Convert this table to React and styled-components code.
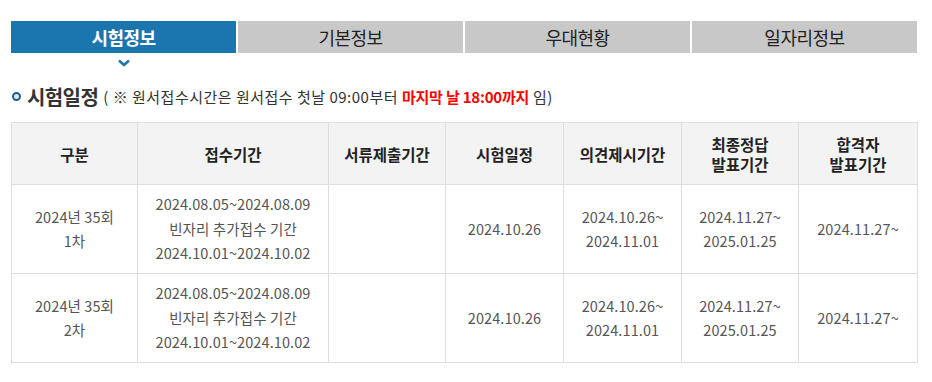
import React from "react";
import styled, { createGlobalStyle } from "styled-components";

const GlobalStyle = createGlobalStyle`
  body {
    margin: 0;
    background: #fff;
    font-family: "Noto Sans CJK KR", "Noto Sans", sans-serif;
  }
`;

const tabs = ["시험정보", "기본정보", "우대현황", "일자리정보"];

const headers = [
  "구분",
  "접수기간",
  "서류제출기간",
  "시험일정",
  "의견제시기간",
  "최종정답\n발표기간",
  "합격자\n발표기간",
];

const rows = [
  {
    round: "2024년 35회\n1차",
    apply: "2024.08.05~2024.08.09\n빈자리 추가접수 기간\n2024.10.01~2024.10.02",
    docs: "",
    exam: "2024.10.26",
    opinion: "2024.10.26~\n2024.11.01",
    answer: "2024.11.27~\n2025.01.25",
    pass: "2024.11.27~",
  },
  {
    round: "2024년 35회\n2차",
    apply: "2024.08.05~2024.08.09\n빈자리 추가접수 기간\n2024.10.01~2024.10.02",
    docs: "",
    exam: "2024.10.26",
    opinion: "2024.10.26~\n2024.11.01",
    answer: "2024.11.27~\n2025.01.25",
    pass: "2024.11.27~",
  },
];

const Wrap = styled.div`
  width: 906px;
  padding: 21px 15px 0 11px;
`;

const TabBar = styled.ul`
  display: grid;
  grid-template-columns: repeat(4, 1fr);
  gap: 2px;
  margin: 0;
  padding: 0;
  list-style: none;
`;

const Tab = styled.li`
  position: relative;
  height: 32px;
  display: flex;
  align-items: center;
  justify-content: center;
  font-size: 18px;
  font-weight: ${(p) => (p.$active ? 700 : 400)};
  color: ${(p) => (p.$active ? "#fff" : "#222")};
  background: ${(p) => (p.$active ? "#1b76b0" : "#c8c8c8")};
  letter-spacing: -0.5px;
`;

const Arrow = styled.svg`
  position: absolute;
  left: 50%;
  top: 38px;
  margin-left: -6px;
`;

const Title = styled.div`
  display: flex;
  align-items: center;
  margin-top: 29px;
  padding-left: 1px;
`;

const Bullet = styled.span`
  width: 5px;
  height: 5px;
  border: 2px solid #1d5d8f;
  border-radius: 50%;
  background: #dbe8f3;
  margin-right: 6px;
`;

const TitleText = styled.h3`
  margin: 0;
  font-size: 20px;
  font-weight: 700;
  color: #333;
  letter-spacing: -0.6px;
`;

const Note = styled.span`
  margin-left: 5px;
  font-size: 15px;
  color: #333;
  letter-spacing: 0.5px;
`;

const Strong = styled.b`
  color: #ff0000;
  font-weight: 700;
  letter-spacing: -0.2px;
`;

const Table = styled.table`
  width: 906px;
  margin-top: 11px;
  border-collapse: collapse;
  table-layout: fixed;
`;

const Th = styled.th`
  height: 61px;
  padding: 0;
  border: 1px solid #dedede;
  background: #f3f3f3;
  color: #222;
  font-size: 15.5px;
  font-weight: 700;
  line-height: 20px;
  white-space: pre-line;
  text-align: center;
`;

const Td = styled.td`
  height: 88px;
  padding: 0;
  border: 1px solid #dedede;
  color: #555;
  font-size: 14.5px;
  line-height: 24.5px;
  letter-spacing: 0.1px;
  white-space: pre-line;
  text-align: center;
`;

const widths = [126, 191, 117, 118, 118, 117, 119];

export default function App() {
  return (
    <Wrap>
      <GlobalStyle />
      <TabBar>
        {tabs.map((t, i) => (
          <Tab key={t} $active={i === 0}>
            {t}
            {i === 0 && (
              <Arrow width="12" height="8" viewBox="0 0 12 8">
                <path d="M1 1.5 L6 6 L11 1.5" fill="none" stroke="#1b76b0" strokeWidth="2.6" />
              </Arrow>
            )}
          </Tab>
        ))}
      </TabBar>
      <Title>
        <Bullet />
        <TitleText>시험일정</TitleText>
        <Note>
          ( ※ 원서접수시간은 원서접수 첫날 09:00부터 <Strong>마지막 날 18:00까지</Strong> 임)
        </Note>
      </Title>
      <Table>
        <colgroup>
          {widths.map((w, i) => (
            <col key={i} style={{ width: w }} />
          ))}
        </colgroup>
        <thead>
          <tr>
            {headers.map((h) => (
              <Th key={h}>{h}</Th>
            ))}
          </tr>
        </thead>
        <tbody>
          {rows.map((r, i) => (
            <tr key={i}>
              <Td>{r.round}</Td>
              <Td>{r.apply}</Td>
              <Td>{r.docs}</Td>
              <Td>{r.exam}</Td>
              <Td>{r.opinion}</Td>
              <Td>{r.answer}</Td>
              <Td>{r.pass}</Td>
            </tr>
          ))}
        </tbody>
      </Table>
    </Wrap>
  );
}
